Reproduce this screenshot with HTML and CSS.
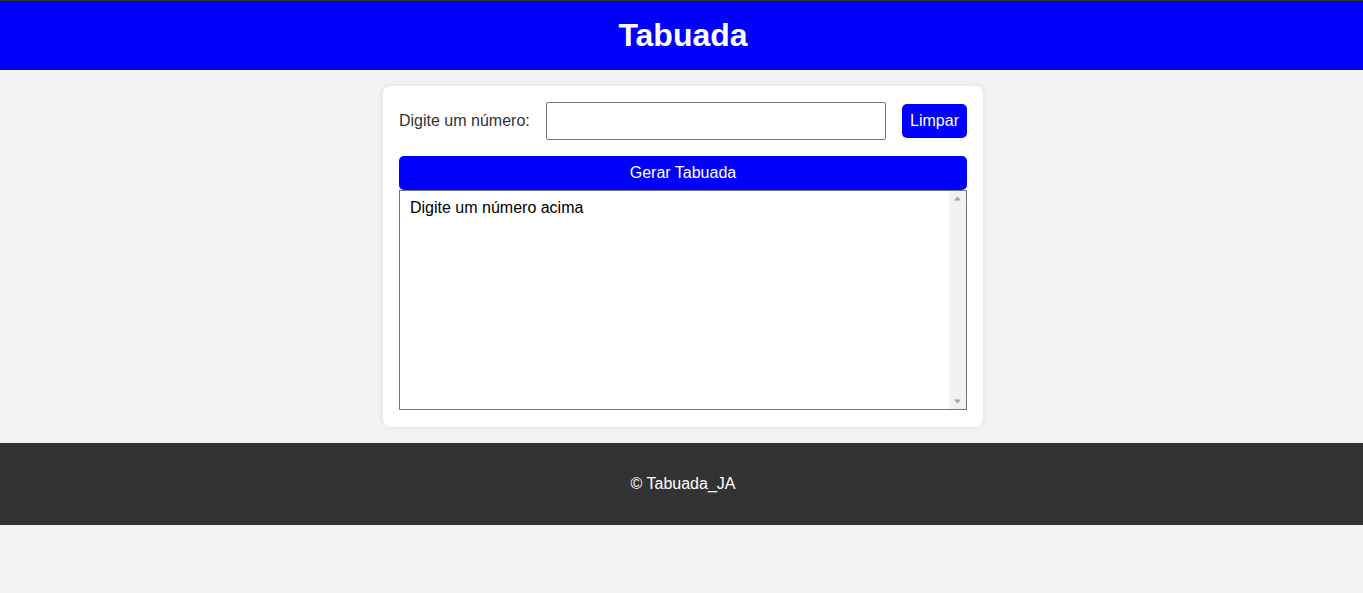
FILE: index.html
```html
<!DOCTYPE html>
<html lang="pt">
<head>
<meta charset="utf-8">
<title>Tabuada</title>
<link rel="stylesheet" href="styles.css">
</head>
<body>
<header class="topo">
  <h1 class="titulo">Tabuada</h1>
</header>
<main class="conteudo">
  <section class="cartao">
    <div class="linha">
      <label class="rotulo" for="num">Digite um número:</label>
      <input class="campo" id="num" type="number">
      <button class="botao botao-limpar" type="button">Limpar</button>
    </div>
    <button class="botao botao-gerar" type="button">Gerar Tabuada</button>
    <div class="caixa">
      <textarea class="resultado" readonly>Digite um número acima</textarea>
      <div class="barra" aria-hidden="true">
        <svg class="seta" width="17" height="17" viewBox="0 0 17 17"><path d="M8.5 5.5 L12 9.5 L5 9.5 Z" fill="#a3a3a3"/></svg>
        <svg class="seta" width="17" height="17" viewBox="0 0 17 17"><path d="M5 7.5 L12 7.5 L8.5 11.5 Z" fill="#a3a3a3"/></svg>
      </div>
    </div>
  </section>
</main>
<footer class="rodape">
  <p class="rodape-texto">© Tabuada_JA</p>
</footer>
</body>
</html>
```

FILE: styles.css
```css
* { box-sizing: border-box; }
html, body {
  margin: 0;
  padding: 0;
}
body {
  background: #f3f3f3;
  font-family: "Liberation Sans", Arial, sans-serif;
  font-size: 16px;
  color: #333;
}
.topo {
  background: #0000ff;
  border-top: 1px solid #333;
  height: 70px;
  padding-left: 3px;
  padding-bottom: 2px;
  display: flex;
  align-items: center;
  justify-content: center;
}
.titulo {
  margin: 0;
  color: #fff;
  font-size: 32px;
  font-weight: bold;
  line-height: 1;
}
.conteudo {
  display: flex;
  justify-content: center;
  padding-top: 16px;
  padding-left: 3px;
}
.cartao {
  width: 600px;
  background: #fff;
  border-radius: 8px;
  padding: 16px 16px 17px;
  box-shadow: 0 0 6px rgba(0,0,0,0.1);
  display: flex;
  flex-direction: column;
}
.linha {
  display: flex;
  align-items: center;
  gap: 16px;
}
.rotulo {
  color: #333;
  width: 131px;
}
.campo {
  width: 340px;
  height: 38px;
  border: 1px solid #767676;
  border-radius: 2px;
  font-size: 16px;
  font-family: inherit;
  padding: 4px 8px;
}
.botao {
  background: #0000ff;
  color: #fff;
  border: none;
  border-radius: 5px;
  font-family: inherit;
  font-size: 16px;
  line-height: 18px;
  cursor: pointer;
}
.botao-limpar {
  padding: 8px 8px;
  width: 65px;
  height: 34px;
}
.botao-gerar {
  margin-top: 16px;
  height: 34px;
  width: 100%;
  padding: 0;
}
.caixa {
  position: relative;
}
.resultado {
  width: 100%;
  height: 220px;
  border: 1px solid #767676;
  padding: 8px 27px 8px 10px;
  font-family: inherit;
  font-size: 16px;
  color: #000;
  resize: none;
  overflow: hidden;
  display: block;
  margin: 0;
}
.barra {
  position: absolute;
  top: 1px;
  right: 1px;
  bottom: 1px;
  width: 17px;
  background: #f1f1f1;
  display: flex;
  flex-direction: column;
  justify-content: space-between;
}
.seta {
  display: block;
}
.rodape {
  margin-top: 16px;
  background: #333;
  height: 82px;
  padding-left: 3px;
  display: flex;
  align-items: center;
  justify-content: center;
}
.rodape-texto {
  margin: 0;
  color: #fff;
}
```
